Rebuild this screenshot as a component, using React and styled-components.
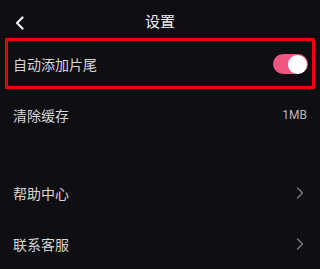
import styled, { createGlobalStyle } from "styled-components";

const GlobalStyle = createGlobalStyle`
    html, body {
        margin: 0;
        padding: 0;
        background: #0f0e13;
    }
    * {
        box-sizing: border-box;
    }
`;

const App = () => {
    return (
        <Page>
            <GlobalStyle />
            <Header>
                <BackButton type="button">
                    <svg width="11" height="14" viewBox="0 0 11 14">
                        <path d="M8.5 1.5 L3 7 L8.5 12.5" fill="none" stroke="#f2f2f2" strokeWidth="2.2" strokeLinecap="round" strokeLinejoin="round" />
                    </svg>
                </BackButton>
                <Title>设置</Title>
            </Header>
            <Highlight>
                <Row $inner>
                    <Label>自动添加片尾</Label>
                    <Switch $on>
                        <Knob />
                    </Switch>
                </Row>
            </Highlight>
            <Row>
                <Label>清除缓存</Label>
                <Value>1MB</Value>
            </Row>
            <Spacer />
            <Row>
                <Label>帮助中心</Label>
                <Chevron />
            </Row>
            <Row>
                <Label>联系客服</Label>
                <Chevron />
            </Row>
        </Page>
    );
};

const Chevron = () => (
    <ChevronBox>
        <svg width="8" height="12" viewBox="0 0 8 12">
            <path d="M1.5 1 L6.5 6 L1.5 11" fill="none" stroke="#7a7a80" strokeWidth="1.4" strokeLinecap="round" strokeLinejoin="round" />
        </svg>
    </ChevronBox>
);

export default App;

const Page = styled.div`
    width: 320px;
    height: 269px;
    overflow: hidden;
    background: #0f0e13;
    font-family: "Noto Sans CJK SC", "Noto Sans", sans-serif;
    display: flex;
    flex-direction: column;
`;

const Header = styled.div`
    height: 39px;
    padding-top: 5px;
    display: flex;
    align-items: center;
    justify-content: center;
    position: relative;
`;

const BackButton = styled.button`
    position: absolute;
    left: 14px;
    top: 16px;
    background: none;
    border: none;
    padding: 0;
    display: flex;
    cursor: pointer;
`;

const Title = styled.span`
    color: #ededed;
    font-size: 15px;
    line-height: 20px;
`;

const Highlight = styled.div`
    margin: 0 5px;
    height: 53px;
    border: 3px solid #e8000b;
    display: flex;
`;

const Row = styled.div`
    height: ${(p) => (p.$inner ? "auto" : "51px")};
    flex: ${(p) => (p.$inner ? "1" : "0 0 51px")};
    padding: ${(p) => (p.$inner ? "2px 4px 0 5px" : "0 13px")};
    display: flex;
    align-items: center;
    justify-content: space-between;
`;

const Label = styled.span`
    color: #d6d6d8;
    font-size: 14px;
    line-height: 20px;
`;

const Value = styled.span`
    color: #b8b8bc;
    font-size: 12px;
    font-family: "Roboto", "Liberation Sans", sans-serif;
`;

const Switch = styled.div`
    width: 35px;
    height: 20px;
    border-radius: 10px;
    background: ${(p) => (p.$on ? "#ee5680" : "#444")};
    position: relative;
`;

const Knob = styled.div`
    position: absolute;
    top: 0.5px;
    right: 1px;
    width: 19px;
    height: 19px;
    border-radius: 50%;
    background: #ffffff;
`;

const ChevronBox = styled.span`
    display: flex;
    margin-right: 3px;
`;

const Spacer = styled.div`
    height: 27px;
    flex-shrink: 0;
`;
